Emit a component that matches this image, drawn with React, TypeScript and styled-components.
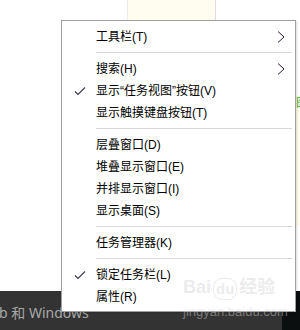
import styled, { createGlobalStyle } from "styled-components";

type Entry =
    | { kind: "item"; label: string; checked?: boolean; sub?: boolean }
    | { kind: "sep" };

const entries: Entry[] = [
    { kind: "item", label: "工具栏(T)", sub: true },
    { kind: "sep" },
    { kind: "item", label: "搜索(H)", sub: true },
    { kind: "item", label: "显示“任务视图”按钮(V)", checked: true },
    { kind: "item", label: "显示触摸键盘按钮(T)" },
    { kind: "sep" },
    { kind: "item", label: "层叠窗口(D)" },
    { kind: "item", label: "堆叠显示窗口(E)" },
    { kind: "item", label: "并排显示窗口(I)" },
    { kind: "item", label: "显示桌面(S)" },
    { kind: "sep" },
    { kind: "item", label: "任务管理器(K)" },
    { kind: "sep" },
    { kind: "item", label: "锁定任务栏(L)", checked: true },
    { kind: "item", label: "属性(R)" },
];

const CheckIcon = () => (
    <svg width="12" height="9" viewBox="0 0 12 9">
        <path d="M1 4.5 L4 7.5 L11 0.5" fill="none" stroke="#3a3a4a" strokeWidth="1.1" />
    </svg>
);

const ChevronIcon = () => (
    <svg width="8" height="12" viewBox="0 0 8 12">
        <path d="M1 0.5 L7 6 L1 11.5" fill="none" stroke="#2a1a3a" strokeWidth="1" />
    </svg>
);

const App = () => {
    return (
        <>
            <GlobalStyle />
            <Screen>
                <Desktop>
                    <Blank />
                    <NotePanel />
                    <Filler />
                    <EdgeStrip>
                        <EdgeWhite />
                        <EdgeNote>图</EdgeNote>
                        <EdgeWhite />
                    </EdgeStrip>
                </Desktop>
                <Taskbar>
                    <TaskText>b 和 Windows</TaskText>
                    <Tray />
                </Taskbar>

                <ContextMenu>
                    {entries.map((entry, i) =>
                        entry.kind === "sep" ? (
                            <Separator key={i} />
                        ) : (
                            <MenuItem key={i}>
                                <CheckCell>{entry.checked && <CheckIcon />}</CheckCell>
                                <Label>{entry.label}</Label>
                                <ArrowCell>{entry.sub && <ChevronIcon />}</ArrowCell>
                            </MenuItem>
                        )
                    )}
                </ContextMenu>

                <Watermark>
                    <WatermarkLogo>
                        <span>Bai</span>
                        <Paw>du</Paw>
                        <span>经验</span>
                    </WatermarkLogo>
                    <WatermarkUrl>jingyan.baidu.com</WatermarkUrl>
                </Watermark>
            </Screen>
        </>
    );
};

const GlobalStyle = createGlobalStyle`
    html, body {
        margin: 0;
        padding: 0;
        background: #ffffff;
    }
`;

const Screen = styled.div`
    position: relative;
    width: 300px;
    height: 330px;
    overflow: hidden;
    display: flex;
    flex-direction: column;
    background: #ffffff;
    font-family: "Liberation Sans", "Noto Sans CJK SC", sans-serif;
`;

const Desktop = styled.div`
    flex: 1;
    display: flex;
`;

const Blank = styled.div`
    width: 127px;
`;

const NotePanel = styled.div`
    width: 87px;
    height: 20px;
    background: #fffdf0;
    border-left: 1px solid #ececec;
    border-right: 1px solid #dcdcdc;
`;

const Filler = styled.div`
    flex: 1;
`;

const EdgeStrip = styled.div`
    width: 4px;
    display: flex;
    flex-direction: column;
`;

const EdgeWhite = styled.div`
    flex: 1;
`;

const EdgeNote = styled.div`
    height: 130px;
    margin-top: 30px;
    background: #fffcec;
    color: #3cb034;
    font-family: "Noto Sans CJK SC", sans-serif;
    font-size: 12px;
    line-height: 12px;
    overflow: hidden;
`;

const Taskbar = styled.div`
    height: 39px;
    display: flex;
    align-items: center;
    background: #333333;
`;

const TaskText = styled.div`
    flex: 1;
    margin-left: -1px;
    margin-top: 2px;
    color: #a8a8a8;
    font-family: "Noto Sans", "Noto Sans CJK SC", sans-serif;
    font-size: 14px;
    white-space: nowrap;
`;

const Tray = styled.div`
    width: 18px;
    height: 100%;
    background: #0b0f10;
`;

const ContextMenu = styled.div`
    position: absolute;
    left: 61px;
    top: 20px;
    width: 235px;
    box-sizing: border-box;
    padding: 5px 0 3px;
    background: #ffffff;
    border: 1px solid #a0a0a0;
    box-shadow: 1px 1px 2px rgba(0, 0, 0, 0.15);
`;

const MenuItem = styled.div`
    height: 22px;
    display: flex;
    align-items: center;
    color: #000000;
    font-size: 12px;
`;

const CheckCell = styled.div`
    width: 34px;
    display: flex;
    justify-content: flex-start;
    padding-left: 12px;
    box-sizing: border-box;
`;

const Label = styled.span`
    flex: 1;
    white-space: nowrap;
    line-height: 14px;
`;

const ArrowCell = styled.div`
    width: 18px;
    display: flex;
    align-items: center;
`;

const Separator = styled.div`
    height: 1px;
    margin: 4px 3px 5px 34px;
    background: #d7d7d7;
`;

const Watermark = styled.div`
    position: absolute;
    left: 183px;
    top: 274px;
    display: flex;
    flex-direction: column;
    align-items: flex-start;
    gap: 4px;
    pointer-events: none;
`;

const WatermarkLogo = styled.div`
    display: flex;
    align-items: flex-end;
    gap: 2px;
    font-family: "Liberation Sans", "Noto Sans CJK SC", sans-serif;
    font-size: 18px;
    font-weight: bold;
    color: rgba(190, 190, 190, 0.3);
    line-height: 26px;
`;

const Paw = styled.span`
    border-radius: 9px;
    padding: 0 2px;
    border: 1px solid rgba(190, 190, 190, 0.3);
    font-size: 15px;
    line-height: 20px;
`;

const WatermarkUrl = styled.div`
    font-family: "Liberation Sans", sans-serif;
    font-size: 13px;
    color: rgba(215, 215, 215, 0.45);
`;

export default App;
